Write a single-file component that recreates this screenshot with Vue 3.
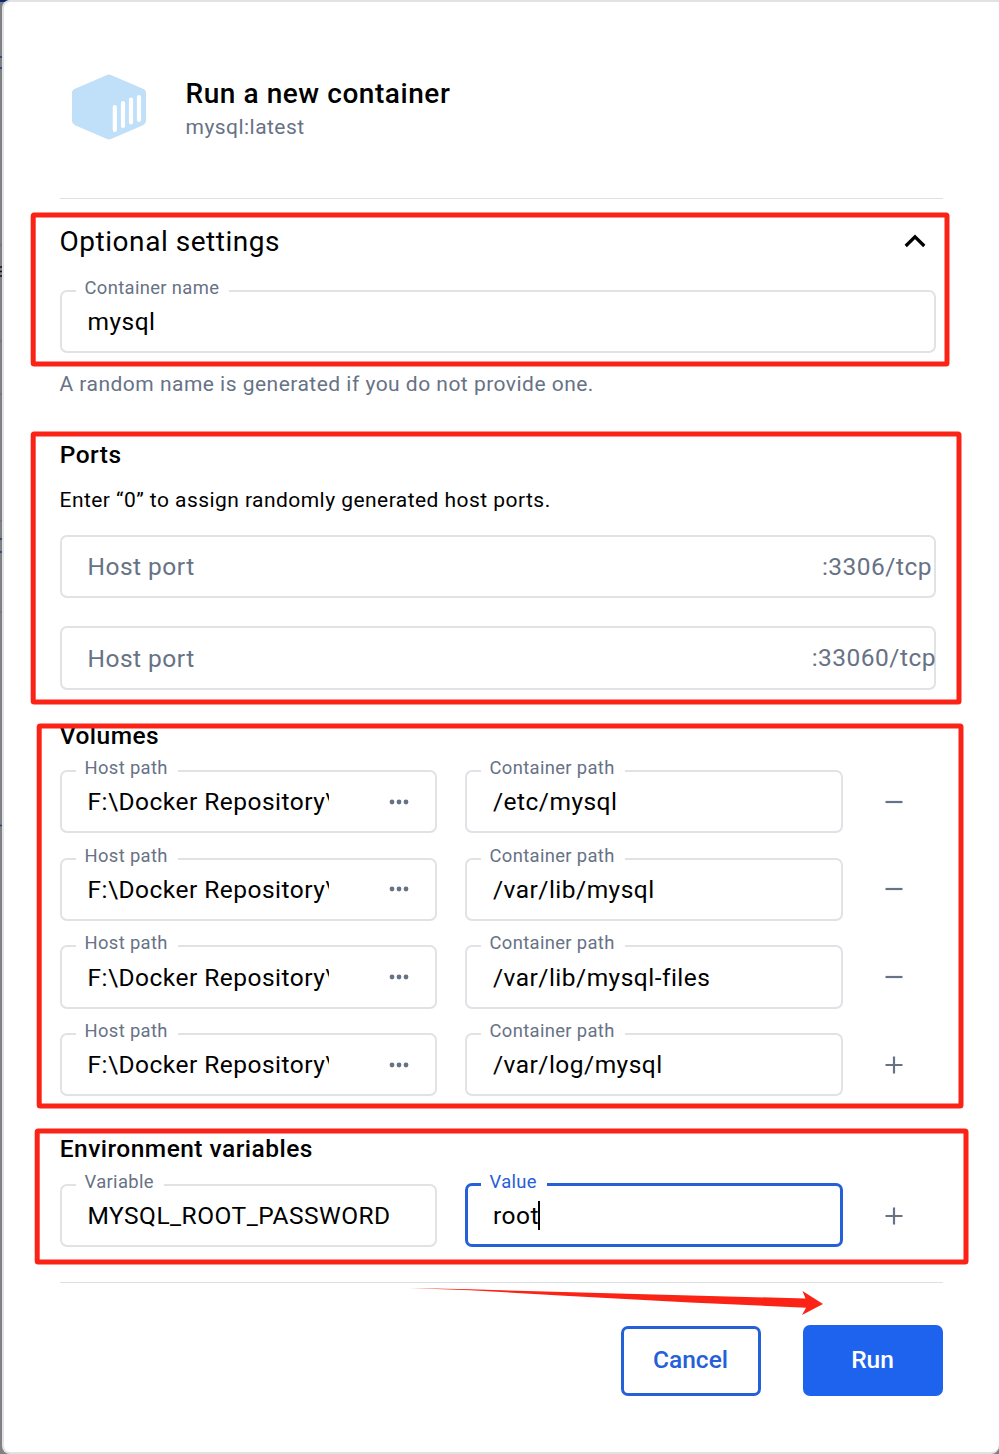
<script setup>
const ports = [
  { suffix: ':3306/tcp', wide: false },
  { suffix: ':33060/tcp', wide: true },
]
const volumes = [
  { host: 'F:\\Docker Repository\\', path: '/etc/mysql', last: false },
  { host: 'F:\\Docker Repository\\', path: '/var/lib/mysql', last: false },
  { host: 'F:\\Docker Repository\\', path: '/var/lib/mysql-files', last: false },
  { host: 'F:\\Docker Repository\\', path: '/var/log/mysql', last: true },
]
</script>

<template>
  <div class="backdrop">
    <svg class="behind" width="8" height="1454" viewBox="0 0 8 1454">
      <rect width="8" height="2" fill="#0b2a6b" />
      <path d="M0 57h2M0 68h2M0 539h2M0 552h2M0 825.5h2" stroke="#1c3c7c" stroke-width="1.5" />
      <path d="M0 267h2M0 271.500h2M0 276h2" stroke="#111" stroke-width="1.5" />
      <path d="M0 245h2M0 341h2M0 394h2M0 521h2M0 612h2" stroke="#6c6d70" />
    </svg>
    <main class="dialog">
      <header class="head">
        <svg class="logo" width="76" height="68" viewBox="0 0 76 68">
          <path d="M35.500 2.200Q38 1 40.500 2.200L72 15.800Q75 17.100 75 20V48Q75 50.800 72 52.200L40.500 65.800Q38 67 35.500 65.800L4 52.200Q1 50.800 1 48V20Q1 17.100 4 15.800Z" fill="#c0dff8" />
          <path d="M43.800 34V57M52 30V53M60 26.500V49.500M68 24V47" stroke="#fff" stroke-width="4.200" stroke-linecap="round" />
        </svg>
        <div class="titles">
          <h1 class="title">Run a new container</h1>
          <p class="subtitle">mysql:latest</p>
        </div>
      </header>

      <section class="optional">
        <div class="accordion">
          <h2 class="accordion-title">Optional settings</h2>
          <svg width="22" height="14" viewBox="0 0 22 14">
            <path d="M1.700 12L11 2.800L20.300 12" fill="none" stroke="#000" stroke-width="3.200" />
          </svg>
        </div>
        <div class="field">
          <span class="label">Container name</span>
          <span class="value">mysql</span>
        </div>
        <p class="helper">A random name is generated if you do not provide one.</p>
      </section>

      <section class="ports">
        <h3 class="section-title">Ports</h3>
        <p class="hint">Enter “0” to assign randomly generated host ports.</p>
        <div class="port-list">
          <div v-for="p in ports" :key="p.suffix" class="field port" :class="{ wide: p.wide }">
            <span class="value muted">Host port</span>
            <span class="suffix">{{ p.suffix }}</span>
          </div>
        </div>
      </section>

      <section class="volumes">
        <h3 class="section-title">Volumes</h3>
        <div class="rows">
          <div v-for="v in volumes" :key="v.path" class="row">
            <div class="field">
              <span class="label">Host path</span>
              <span class="value clip">{{ v.host }}</span>
              <svg class="dots" width="20" height="6" viewBox="0 0 20 6" fill="#677285">
                <circle cx="3" cy="3" r="2.400" /><circle cx="10" cy="3" r="2.400" /><circle cx="17" cy="3" r="2.400" />
              </svg>
            </div>
            <div class="field second">
              <span class="label">Container path</span>
              <span class="value">{{ v.path }}</span>
            </div>
            <svg class="action" width="18" height="18" viewBox="0 0 18 18" stroke="#677285" stroke-width="2.200">
              <path :d="v.last ? 'M.5 9H17.500M9 .5V17.500' : 'M.5 9H17.500'" />
            </svg>
          </div>
        </div>
      </section>

      <section class="env">
        <h3 class="section-title">Environment variables</h3>
        <div class="row">
          <div class="field">
            <span class="label">Variable</span>
            <span class="value">MYSQL_ROOT_PASSWORD</span>
          </div>
          <div class="field second focused">
            <span class="label">Value</span>
            <span class="value">root</span><i class="caret"></i>
          </div>
          <svg class="action" width="18" height="18" viewBox="0 0 18 18" stroke="#677285" stroke-width="2.200">
            <path d="M.5 9H17.500M9 .5V17.500" />
          </svg>
        </div>
      </section>

      <footer class="foot">
        <button class="btn cancel">Cancel</button>
        <button class="btn run">Run</button>
      </footer>
    </main>

    <svg class="marks" width="999" height="1454" viewBox="0 0 999 1454">
      <g fill="none" stroke="#fb2316" stroke-width="5" stroke-linejoin="round">
        <rect x="33.200" y="215" width="913.800" height="149" rx="1" />
        <rect x="33.200" y="434" width="925.800" height="268" rx="1" />
        <rect x="39.200" y="726" width="921.800" height="380" rx="1" />
        <rect x="37.200" y="1131" width="928.800" height="131" rx="1" />
      </g>
      <path d="M409 1288L470 1289.300L600 1293L805.500 1298.500L802.500 1291L823 1304L802 1315L806 1307.700L690 1302.500L560 1295.500L470 1290.300Z" fill="#fb2316" />
    </svg>
  </div>
</template>

<style>
body {
  margin: 0;
}
</style>

<style scoped>
.backdrop {
  position: relative;
  box-sizing: border-box;
  width: 999px;
  height: 1454px;
  padding-left: 2px;
  overflow: hidden;
  background: #808083;
  font-family: Roboto, "Noto Sans", sans-serif;
  color: #000;
}
.behind,
.marks {
  position: absolute;
  left: 0;
  top: 0;
}
.dialog {
  position: relative;
  box-sizing: border-box;
  width: 997px;
  height: 1454px;
  padding: 0 54px 0 56px;
  border: 2px solid #e1e2e6;
  border-right-width: 0;
  border-radius: 8px 0 8px 8px;
  background: #fff;
}
h1, h2, h3, p {
  margin: 0;
}
.head {
  box-sizing: border-box;
  display: flex;
  width: 883px;
  height: 197px;
  padding: 71px 0 0 11px;
  gap: 38.500px;
  border-bottom: 1px solid #dfe0e3;
}
.title {
  margin-top: 2px;
  font-size: 28px;
  line-height: 38px;
  font-weight: 500;
  letter-spacing: 0.56px;
}
.subtitle {
  font-size: 21px;
  line-height: 28px;
  letter-spacing: 0.46px;
  color: #677285;
}
.accordion {
  display: flex;
  align-items: center;
  justify-content: space-between;
  width: 866px;
  height: 84px;
  margin-bottom: 7px;
}
.accordion-title {
  font-size: 28px;
  font-weight: 400;
  letter-spacing: 0.54px;
  text-indent: -0.500px;
}
.field {
  position: relative;
  box-sizing: border-box;
  display: flex;
  align-items: center;
  width: 377px;
  height: 63px;
  padding: 0 26px 0 25.500px;
  border: 2px solid #e1e2e6;
  border-radius: 7px;
}
.field.second {
  width: 378px;
  padding-left: 26px;
}
.optional .field,
.port {
  width: 876px;
}
.label {
  position: absolute;
  left: 14px;
  top: -16px;
  padding: 0 10px 0 8.500px;
  background: #fff;
  font-size: 18.400px;
  line-height: 24px;
  letter-spacing: 0.35px;
  white-space: nowrap;
  color: #677285;
}
.value {
  font-size: 24.500px;
  line-height: 36px;
  letter-spacing: 0.48px;
  white-space: nowrap;
}
.muted,
.suffix {
  color: #677285;
}
.helper,
.hint {
  font-size: 21px;
  line-height: 32px;
  letter-spacing: 0.45px;
  text-indent: -0.500px;
}
.helper {
  margin-top: 15px;
  letter-spacing: 0.48px;
  color: #677285;
}
.section-title {
  font-size: 24.500px;
  line-height: 32px;
  font-weight: 500;
  letter-spacing: 0.48px;
  text-indent: -0.300px;
}
.ports {
  margin-top: 39px;
}
.hint {
  margin-top: 13px;
}
.port-list {
  display: flex;
  flex-direction: column;
  gap: 28px;
  margin-top: 19px;
}
.port {
  justify-content: space-between;
  padding-right: 2px;
}
.port.wide {
  height: 64px;
  padding-right: 0;
}
.wide .value {
  padding-top: 1px;
}
.wide .suffix {
  margin: 0 -2px 2px 0;
}
.suffix {
  font-size: 24.500px;
  letter-spacing: 0.48px;
}
.volumes {
  margin-top: 30px;
}
.rows {
  display: flex;
  flex-direction: column;
  gap: 24px;
  margin-top: 18px;
}
.row {
  display: flex;
  align-items: center;
  gap: 28px;
}
.rows .row:first-child {
  margin-bottom: 1px;
}
.rows .row:nth-child(2) .dots,
.rows .row:nth-child(2) .action {
  margin-bottom: 1px;
}
.rows .row:nth-child(3) .field {
  height: 64px;
}
.rows .row:nth-child(3) .value {
  padding-top: 1px;
}
.row .action {
  margin-left: 14px;
}
.clip {
  width: 241px;
  overflow: hidden;
}
.dots {
  margin-left: 60px;
  flex: none;
}
.env {
  margin-top: 37px;
}
.env .row {
  height: 63px;
  margin-top: 19px;
}
.field.focused {
  height: 64px;
  margin-top: -1px;
  padding-left: 25px;
  border: 3px solid #2560d8;
}
.focused .value {
  padding-top: 1px;
}
.focused .label {
  left: 13px;
  top: -16px;
  color: #2560d8;
}
.caret {
  width: 2px;
  height: 29px;
  margin-left: -1px;
  background: #000;
}
.foot {
  display: flex;
  align-items: flex-end;
  justify-content: flex-end;
  gap: 42px;
  width: 883px;
  margin-top: 35px;
  padding-top: 42px;
  border-top: 1px solid #dfe0e3;
}
.btn {
  box-sizing: border-box;
  width: 140px;
  height: 70px;
  padding: 0 1px 3px 0;
  border: 3px solid #2560d8;
  border-radius: 7px;
  background: #fff;
  font: 500 24.500px Roboto, sans-serif;
  color: #2560d8;
}
.run {
  height: 71px;
  padding-bottom: 2px;
  border-color: #1d63ed;
  background: #1d63ed;
  color: #fff;
}
</style>
